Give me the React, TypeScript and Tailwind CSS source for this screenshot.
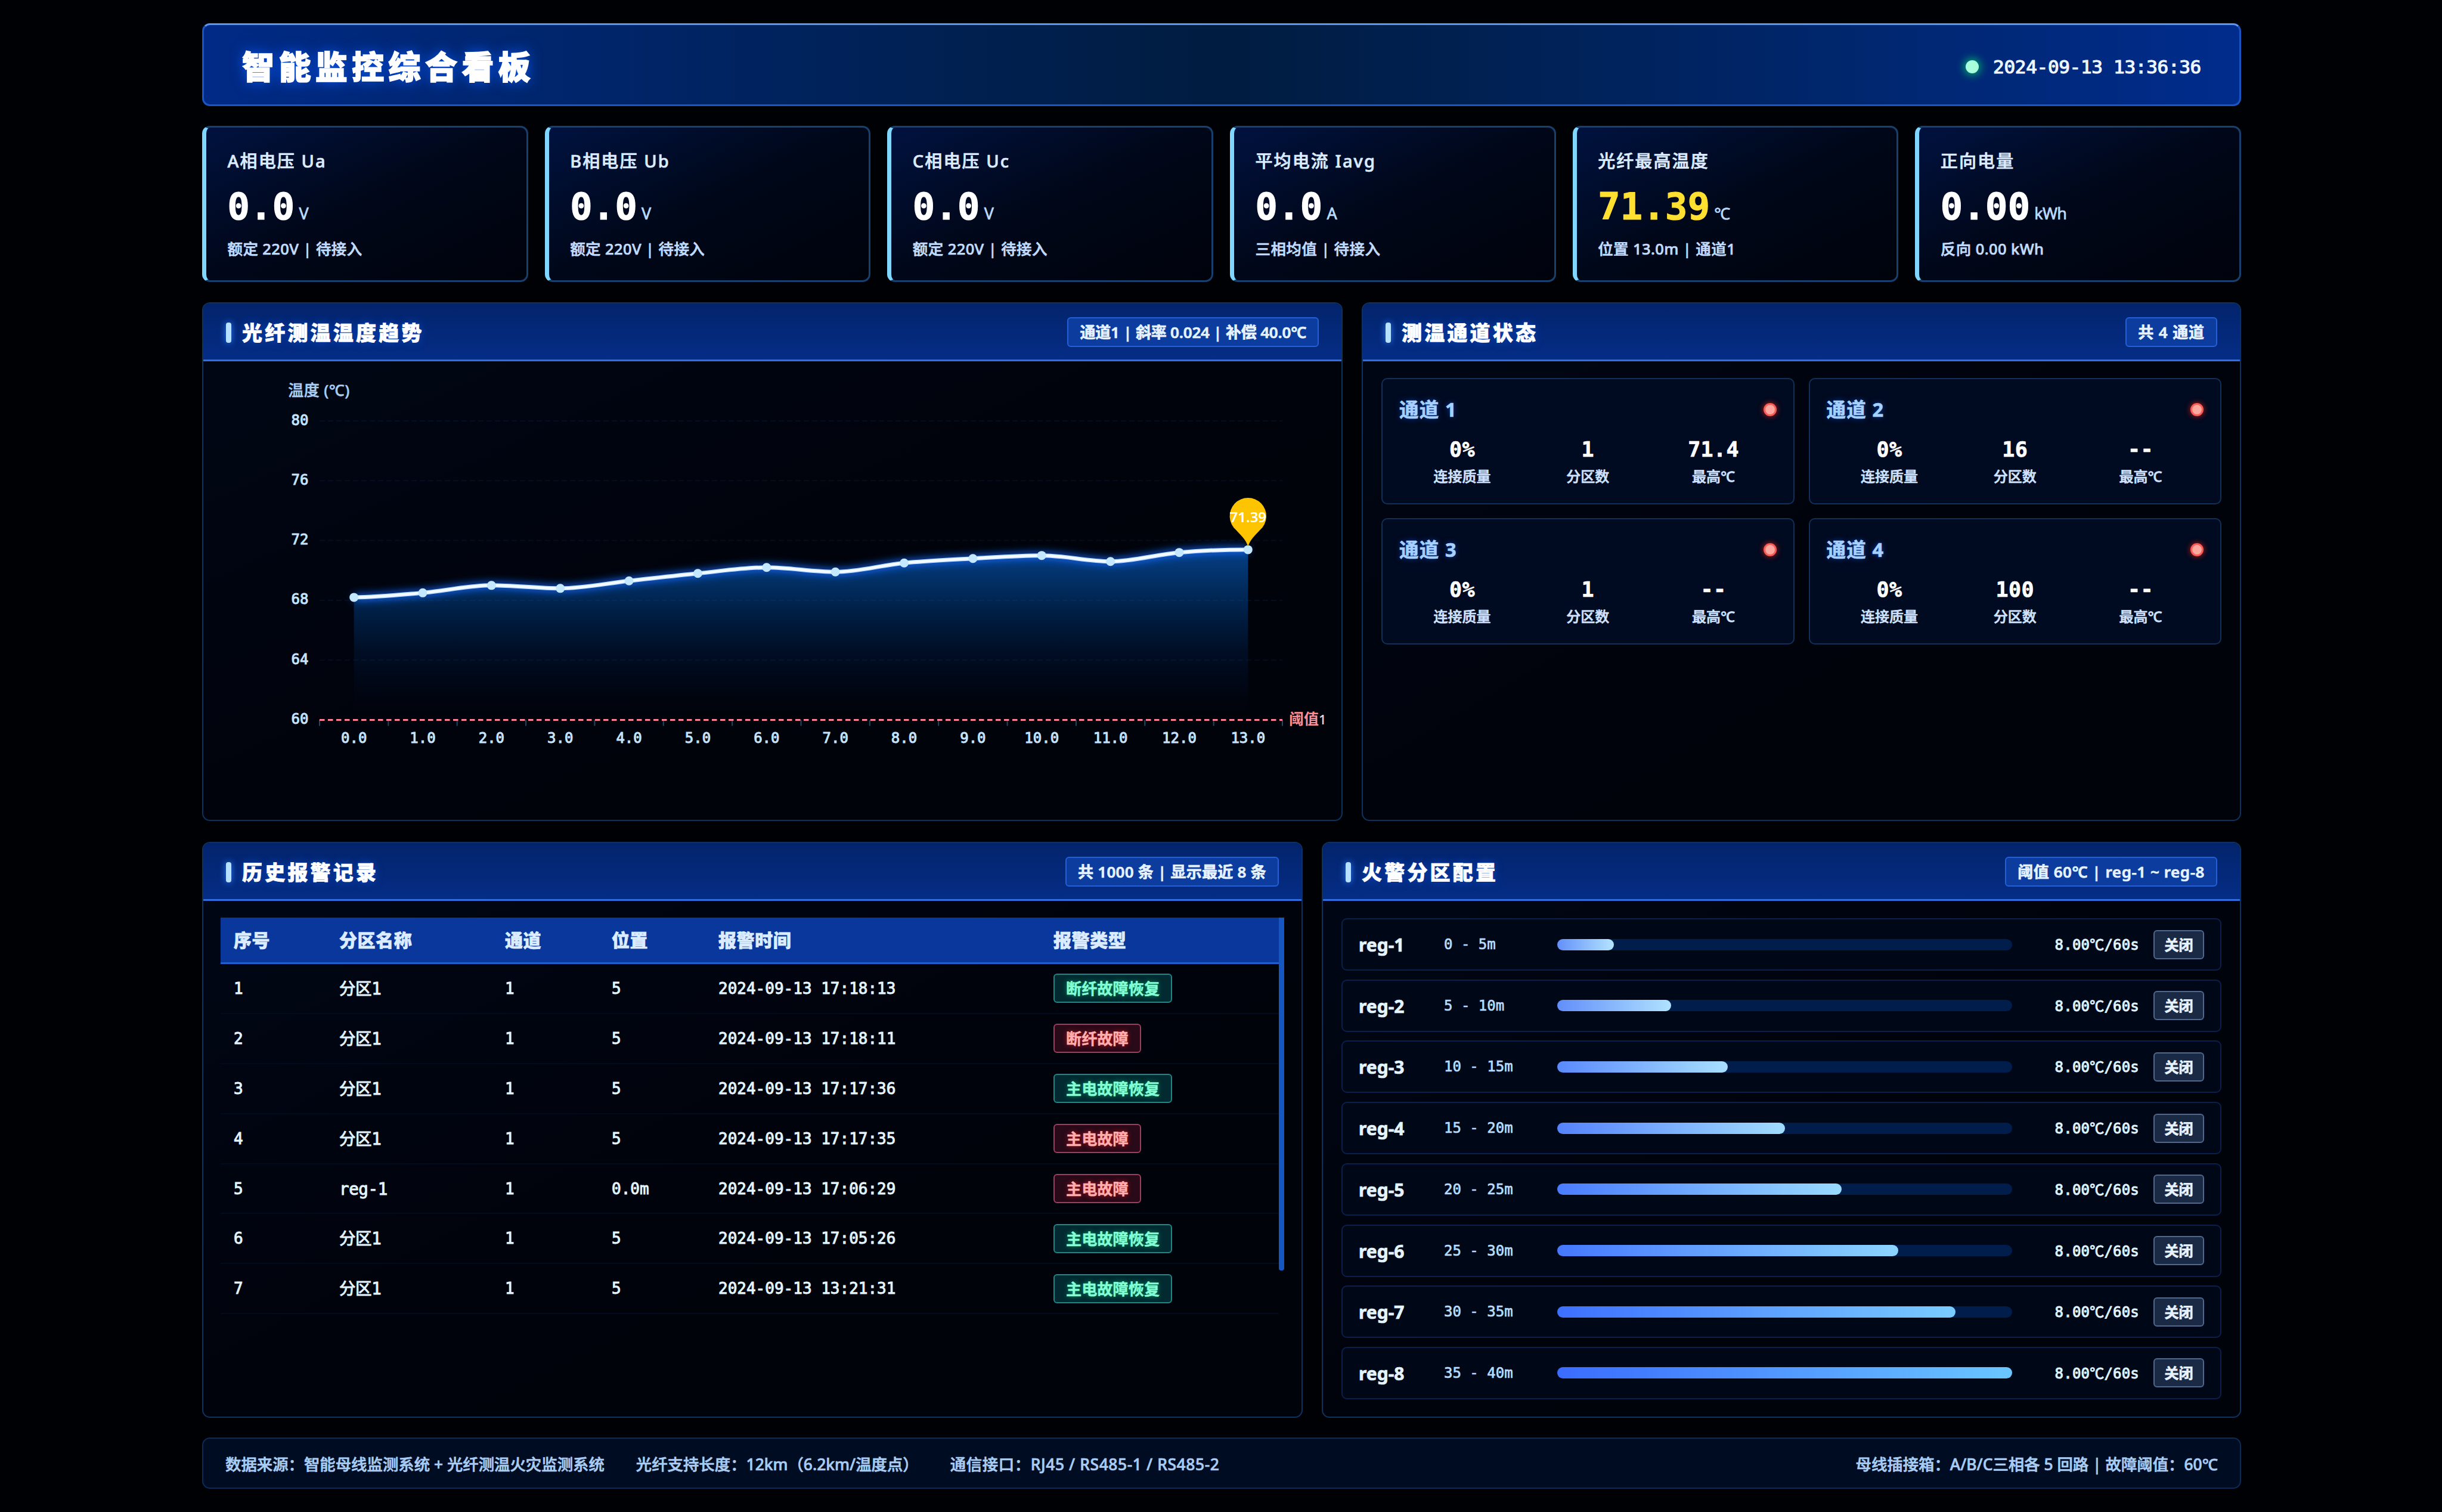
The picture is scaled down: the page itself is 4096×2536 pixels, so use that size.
import type { ReactNode } from "react";
import clsx from "clsx";

const MONO = "font-['DejaVu_Sans_Mono','Noto_Sans_CJK_SC',monospace]";

const kpis = [
  { label: "A相电压 Ua", value: "0.0", unit: "V", sub: "额定 220V | 待接入" },
  { label: "B相电压 Ub", value: "0.0", unit: "V", sub: "额定 220V | 待接入" },
  { label: "C相电压 Uc", value: "0.0", unit: "V", sub: "额定 220V | 待接入" },
  { label: "平均电流 Iavg", value: "0.0", unit: "A", sub: "三相均值 | 待接入" },
  { label: "光纤最高温度", value: "71.39", unit: "℃", sub: "位置 13.0m | 通道1", hot: true },
  { label: "正向电量", value: "0.00", unit: "kWh", sub: "反向 0.00 kWh" },
];

const channels = [
  { name: "通道 1", quality: "0%", zones: "1", max: "71.4" },
  { name: "通道 2", quality: "0%", zones: "16", max: "--" },
  { name: "通道 3", quality: "0%", zones: "1", max: "--" },
  { name: "通道 4", quality: "0%", zones: "100", max: "--" },
];

const alarms = [
  { id: 1, zone: "分区1", channel: 1, pos: "5", time: "2024-09-13 17:18:13", type: "断纤故障恢复" },
  { id: 2, zone: "分区1", channel: 1, pos: "5", time: "2024-09-13 17:18:11", type: "断纤故障" },
  { id: 3, zone: "分区1", channel: 1, pos: "5", time: "2024-09-13 17:17:36", type: "主电故障恢复" },
  { id: 4, zone: "分区1", channel: 1, pos: "5", time: "2024-09-13 17:17:35", type: "主电故障" },
  { id: 5, zone: "reg-1", channel: 1, pos: "0.0m", time: "2024-09-13 17:06:29", type: "主电故障" },
  { id: 6, zone: "分区1", channel: 1, pos: "5", time: "2024-09-13 17:05:26", type: "主电故障恢复" },
  { id: 7, zone: "分区1", channel: 1, pos: "5", time: "2024-09-13 13:21:31", type: "主电故障恢复" },
];

const zones = [
  { name: "reg-1", range: "0 - 5m", percent: 12.5, from: "#6290fa", to: "#b4e4ff" },
  { name: "reg-2", range: "5 - 10m", percent: 25, from: "#628efa", to: "#b0e2ff" },
  { name: "reg-3", range: "10 - 15m", percent: 37.5, from: "#5a8afc", to: "#a8dfff" },
  { name: "reg-4", range: "15 - 20m", percent: 50, from: "#5583fd", to: "#a0dcff" },
  { name: "reg-5", range: "20 - 25m", percent: 62.5, from: "#4a7cff", to: "#98daff" },
  { name: "reg-6", range: "25 - 30m", percent: 75, from: "#4578ff", to: "#8cd4ff" },
  { name: "reg-7", range: "30 - 35m", percent: 87.5, from: "#3d70ff", to: "#7accff" },
  { name: "reg-8", range: "35 - 40m", percent: 100, from: "#3a6cff", to: "#6ac6ff" },
];

const temps = [68.2, 68.5, 69.0, 68.8, 69.3, 69.8, 70.2, 69.9, 70.5, 70.8, 71.0, 70.6, 71.2, 71.39];

// plot area inside the chart svg
const PLOT = { left: 195, right: 1810, top: 100, bottom: 601.5 };
const BAND = (PLOT.right - PLOT.left) / temps.length;
const toX = (i: number) => PLOT.left + BAND * (i + 0.5);
const toY = (v: number) => PLOT.bottom - ((v - 60) / 20) * (PLOT.bottom - PLOT.top);

const smoothPath = (values: number[]) => {
  const pts = values.map((v, i) => [toX(i), toY(v)]);
  const slopes = pts.map((_, i) => {
    if (i === 0 || i === pts.length - 1) return 0;
    const a = (pts[i][1] - pts[i - 1][1]) / BAND;
    const b = (pts[i + 1][1] - pts[i][1]) / BAND;
    return a * b <= 0 ? 0 : (a + b) / 2;
  });
  return pts.reduce((d, [x, y], i) => {
    if (i === 0) return `M${x},${y}`;
    const [px, py] = pts[i - 1];
    const h = BAND / 3;
    return `${d} C${px + h},${py + slopes[i - 1] * h} ${x - h},${y - slopes[i] * h} ${x},${y}`;
  }, "");
};

const TrendChart = () => {
  const line = smoothPath(temps);
  const last = temps.length - 1;

  return (
    <svg viewBox="0 0 1909 769" className="block w-[1909px] h-[769px]">
      <defs>
        <linearGradient id="area" x1="0" y1="0" x2="0" y2="1">
          <stop offset="0" stopColor="#053f86" />
          <stop offset="0.22" stopColor="#022c5e" />
          <stop offset="0.4" stopColor="#001c40" />
          <stop offset="0.6" stopColor="#000e24" />
          <stop offset="0.8" stopColor="#000614" />
          <stop offset="1" stopColor="#00030b" stopOpacity="0" />
        </linearGradient>
        <filter id="glow" x="-5%" y="-100%" width="110%" height="300%">
          <feGaussianBlur stdDeviation="7" />
        </filter>
      </defs>

      <path d={`${line} V${PLOT.bottom} H${toX(0)} Z`} fill="url(#area)" />

      {[80, 76, 72, 68, 64].map((v) => (
        <line
          key={v}
          x1={PLOT.left}
          x2={PLOT.right}
          y1={toY(v)}
          y2={toY(v)}
          stroke="#2a6ab0"
          strokeOpacity="0.1"
          strokeWidth="2"
          strokeDasharray="9 5"
        />
      ))}
      {Array.from({ length: temps.length + 1 }).map((_, i) => (
        <line
          key={i}
          x1={PLOT.left + BAND * i}
          x2={PLOT.left + BAND * i}
          y1={PLOT.bottom}
          y2={PLOT.bottom + 10}
          stroke="#1d4a66"
          strokeWidth="2"
        />
      ))}

      <line
        x1={PLOT.left}
        x2={PLOT.right}
        y1={PLOT.bottom}
        y2={PLOT.bottom}
        stroke="#ff7f98"
        strokeWidth="3"
        strokeDasharray="8.5 5.5"
      />

      <path d={line} fill="none" stroke="#1468ff" strokeWidth="10" filter="url(#glow)" />
      <path d={line} fill="none" stroke="#b4dcff" strokeWidth="7" />
      <path d={line} fill="none" stroke="#f4faff" strokeWidth="4.5" />
      {temps.map((v, i) => (
        <circle key={i} cx={toX(i)} cy={toY(v)} r="7.5" fill="#c4e8ff" />
      ))}

      <path
        d="M0,0 C-3,-12 -13,-20 -20,-28 A30.7,30.7 0 1 1 20,-28 C13,-20 3,-12 0,0 Z"
        transform={`translate(${toX(last)} 311)`}
        fill="#ffc400"
      />
      <text
        x={toX(last)}
        y="270"
        textAnchor="middle"
        className="font-['Noto_Sans',sans-serif] text-[24px] font-semibold fill-white"
      >
        71.39
      </text>

      <text
        x="194"
        y="58"
        textAnchor="middle"
        className="text-[26px] tracking-[0.4px] fill-[#a9cdf5] stroke-[#a9cdf5] stroke-[0.5] font-medium"
      >
        温度 (℃)
      </text>
      <g className={clsx(MONO, "text-[24px] fill-[#c6e4ff] stroke-[#c6e4ff] stroke-[1]")}>
        {[80, 76, 72, 68, 64, 60].map((v) => (
          <text key={v} x="176.5" y={toY(v) + 6.5} textAnchor="end">
            {v}
          </text>
        ))}
        {temps.map((_, i) => (
          <text key={i} x={toX(i)} y="639.5" textAnchor="middle">
            {i.toFixed(1)}
          </text>
        ))}
      </g>
      <text x="1821" y="609" className="text-[25px] font-bold fill-[#ff8f94]">
        阈值<tspan className="text-[22px] font-medium fill-[#e6dcf4]">1</tspan>
      </text>
    </svg>
  );
};

interface PanelProps {
  title: string;
  badge: string;
  badgeClassName?: string;
  className?: string;
  children: ReactNode;
}

const Panel = ({ title, badge, badgeClassName, className, children }: PanelProps) => (
  <section
    className={clsx(
      "flex flex-col shrink-0 overflow-hidden rounded-[13px] border-2 border-[#0e3260] bg-linear-to-br from-[#000716] via-[#00030b] to-[#00030a]",
      className
    )}
  >
    <div className="flex items-center justify-between shrink-0 h-[97px] pt-[2px] px-[38px] border-b-3 border-[#2f6fe0] bg-linear-to-b from-[#03246c] to-[#052d86]">
      <div className="flex items-center gap-[18px] pt-[2px]">
        <div className="w-[9px] h-[34px] rounded-[4px] bg-[#b6e2ff] shadow-[0_0_12px_#2f7dff]" />
        <h2 className="text-[34px] leading-[48px] tracking-[4.2px] font-black text-white [text-shadow:0_0_14px_#0a48c8]">
          {title}
        </h2>
      </div>
      <span
        className={clsx(
          "h-[50px] px-[19px] leading-[46px] rounded-[6px] border-2 border-[#2360d8] bg-[#0b3c9e] text-[26px] font-semibold text-[#e6f2ff]",
          badgeClassName
        )}
      >
        {badge}
      </span>
    </div>
    {children}
  </section>
);

const Stat = ({ value, label }: { value: string; label: string }) => (
  <div className="flex-1 text-center">
    <div className={clsx(MONO, "text-[35px] leading-[40px] tracking-[0.4px] font-bold text-white")}>{value}</div>
    <div className="mt-[10px] text-[24px] leading-[30px] font-medium text-[#cfe2ff]">{label}</div>
  </div>
);

const App = () => {
  return (
    <div className="flex flex-col w-[4096px] h-[2536px] pt-[39px] pl-[339px] pr-[337px] overflow-hidden bg-[#000104] font-['Noto_Sans','Noto_Sans_CJK_SC',sans-serif] [-webkit-text-stroke:0.7px]">
      <header className="flex items-center justify-between shrink-0 h-[139px] pt-[7px] px-[64px] rounded-[13px] border-3 border-[#1a55c4] border-t-[#5a98ee] bg-linear-to-r from-[#002a86] via-[#001c40] to-[#002c8c]">
        <h1 className="text-[54px] leading-[70px] tracking-[7.4px] font-black text-white [text-shadow:0_0_22px_#0a5cff] [-webkit-text-stroke:1.6px]">
          智能监控综合看板
        </h1>
        <div className="flex items-center gap-[24px]">
          <div className="w-[22px] h-[22px] rounded-full bg-[#a8ffdc] shadow-[0_0_14px_3px_#00a86e]" />
          <span className={clsx(MONO, "text-[31px] leading-[40px] tracking-[-0.3px] text-[#eef6ff] [-webkit-text-stroke:1.2px]")}>
            2024-09-13 13:36:36
          </span>
        </div>
      </header>

      <div className="grid grid-cols-6 gap-[28px] shrink-0 h-[262px] mt-[33px]">
        {kpis.map((kpi) => (
          <div
            key={kpi.label}
            className="pt-[36px] pl-[35.5px] rounded-[13px] border-3 border-l-7 border-[#17406e] border-l-[#7fd6ff] bg-linear-to-br from-[#001240] via-[#000718] to-[#00030c]"
          >
            <div className="text-[29px] leading-[40px] tracking-[2.1px] font-medium text-[#dcebff]">{kpi.label}</div>
            <div className="flex items-baseline mt-[22px] h-[70px]">
              <span
                className={clsx(
                  MONO,
                  "text-[62px] leading-[70px] font-bold tracking-[0.3px] [-webkit-text-stroke:1.2px]",
                  kpi.hot ? "text-[#ffdf30]" : "text-white"
                )}
              >
                {kpi.value}
              </span>
              <span className="ml-[7px] text-[27px] leading-[30px] tracking-[-0.8px] text-[#bcdcff]">{kpi.unit}</span>
            </div>
            <div className="mt-[17px] text-[25.5px] leading-[36px] tracking-[0.4px] font-medium text-[#c2dcff]">{kpi.sub}</div>
          </div>
        ))}
      </div>

      <div className="flex justify-between shrink-0 h-[870px] mt-[34px]">
        <Panel
          title="光纤测温温度趋势"
          badge="通道1 | 斜率 0.024 | 补偿 40.0℃"
          badgeClassName="tracking-[-0.2px]"
          className="w-[1913px]"
        >
          <TrendChart />
        </Panel>

        <Panel title="测温通道状态" badge="共 4 通道" badgeClassName="tracking-[0.9px]" className="w-[1475px]">
          <div className="grid grid-cols-2 gap-x-[24px] gap-y-[23px] px-[31px] pt-[28px]">
            {channels.map((channel) => (
              <div key={channel.name} className="h-[212px] pt-[31px] px-[28px] rounded-[10px] border-2 border-[#113058] bg-[#000a20]">
                <div className="flex items-center justify-between">
                  <h3 className="text-[32.5px] leading-[40px] tracking-[1.2px] font-bold text-[#a6d0ff] [text-shadow:0_0_10px_#0a40b0]">
                    {channel.name}
                  </h3>
                  <div className="w-[22px] h-[22px] rounded-full border-3 border-[#f85c54] bg-[#ffa8a0] shadow-[0_0_8px_1px_#a01818]" />
                </div>
                <div className="flex mt-[27px]">
                  <Stat value={channel.quality} label="连接质量" />
                  <Stat value={channel.zones} label="分区数" />
                  <Stat value={channel.max} label="最高℃" />
                </div>
              </div>
            ))}
          </div>
        </Panel>
      </div>

      <div className="flex justify-between shrink-0 h-[966px] mt-[35px]">
        <Panel
          title="历史报警记录"
          badge="共 1000 条 | 显示最近 8 条"
          badgeClassName="tracking-[0.25px]"
          className="w-[1846px]"
        >
          <div className="flex px-[29px] pt-[28px]">
            <div className="flex-1">
              <div className="grid grid-cols-[177px_278px_179px_179px_562px_1fr] items-center h-[78px] pl-[22px] border-b-3 border-[#1f5fd0] bg-[#0a379c] text-[30px] tracking-[0.6px] font-black text-[#dcecff]">
                <span>序号</span>
                <span>分区名称</span>
                <span>通道</span>
                <span>位置</span>
                <span>报警时间</span>
                <span>报警类型</span>
              </div>
              {alarms.map((alarm) => (
                <div
                  key={alarm.id}
                  className={clsx(
                    MONO,
                    "grid grid-cols-[177px_278px_179px_179px_562px_1fr] items-center h-[83.9px] pl-[22px] border-b-2 border-[#020b1c] text-[26px] leading-[40px] text-[#e4f4ff] [-webkit-text-stroke:1px]"
                  )}
                >
                  <span>{alarm.id}</span>
                  <span className="text-[27.5px] tracking-[-0.4px]">{alarm.zone}</span>
                  <span>{alarm.channel}</span>
                  <span>{alarm.pos}</span>
                  <span>{alarm.time}</span>
                  <span
                    className={clsx(
                      "justify-self-start h-[49px] px-[19px] leading-[45px] rounded-[6px] border-2 font-['Noto_Sans_CJK_SC',sans-serif] text-[26.2px] font-bold [-webkit-text-stroke:0.4px]",
                      alarm.type.endsWith("恢复")
                        ? "border-[#1f8688] bg-[#022a30] text-[#84ffd4] [text-shadow:0_0_8px_#00a070]"
                        : "border-[#9a405e] bg-[#280a18] text-[#ffb0ae] [text-shadow:0_0_8px_#d01020]"
                    )}
                  >
                    {alarm.type}
                  </span>
                </div>
              ))}
            </div>
            <div className="w-[9px] h-[592px] rounded-b-[4px] bg-[#1656c0]" />
          </div>
        </Panel>

        <Panel
          title="火警分区配置"
          badge="阈值 60℃ | reg-1 ~ reg-8"
          badgeClassName="tracking-[0.55px]"
          className="w-[1542px]"
        >
          <div className="flex flex-col justify-between flex-1 px-[31px] pt-[29px] pb-[29px]">
            {zones.map((zone) => (
              <div
                key={zone.name}
                className="flex items-center h-[88px] pl-[27px] pr-[27px] rounded-[9px] border-2 border-[#08204a] bg-[#000818]"
              >
                <span className="w-[143px] pt-[2px] text-[30px] leading-[40px] font-bold text-[#e4f4ff]">{zone.name}</span>
                <span className={clsx(MONO, "w-[190px] text-[24px] text-[#b8dcff]")}>{zone.range}</span>
                <div className="flex-1 h-[19px] rounded-full bg-[#001d4c]">
                  <div
                    className="h-full rounded-full"
                    style={{
                      width: `${zone.percent}%`,
                      background: `linear-gradient(90deg, ${zone.from}, ${zone.to})`,
                    }}
                  />
                </div>
                <span className={clsx(MONO, "w-[213px] text-right text-[24px] tracking-[0.2px] text-[#dff2ff] [-webkit-text-stroke:1px]")}>
                  8.00<span className="font-['Noto_Sans_CJK_SC',sans-serif]">℃</span>/60s
                </span>
                <span className="w-[85px] h-[49px] ml-[24px] text-center leading-[45px] rounded-[6px] border-2 border-[#50688c] bg-[#1a2a44] text-[24px] font-semibold text-[#e8f2ff]">
                  关闭
                </span>
              </div>
            ))}
          </div>
        </Panel>
      </div>

      <footer className="flex items-center justify-between shrink-0 h-[86px] mt-[33px] pt-[4px] px-[37px] rounded-[13px] border-2 border-[#0c2b56] bg-[#000c22] text-[26.4px] leading-[36px] font-medium text-[#a8ccf4]">
        <div className="flex gap-[53px]">
          <span>数据来源：智能母线监测系统 + 光纤测温火灾监测系统</span>
          <span>光纤支持长度：12km（6.2km/温度点）</span>
          <span className="tracking-[0.6px]">通信接口：RJ45 / RS485-1 / RS485-2</span>
        </div>
        <span>母线插接箱：A/B/C三相各 5 回路 | 故障阈值：60℃</span>
      </footer>
    </div>
  );
};

export default App;
